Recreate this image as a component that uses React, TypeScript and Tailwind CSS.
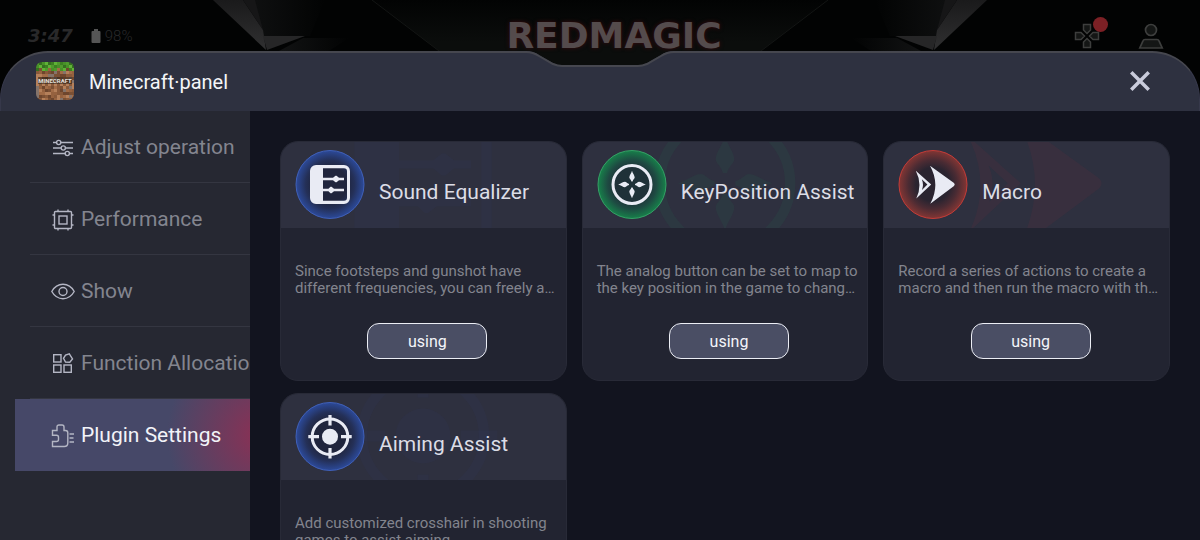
import { useState } from "react";
import type { ReactNode } from "react";

type Tone = "blue" | "green" | "red";

interface Plugin {
  id: string;
  title: string;
  description: string;
  tone: Tone;
  glyph: ReactNode;
}

interface MenuItem {
  id: string;
  label: string;
  icon: ReactNode;
}

const TONES = {
  blue: { center: "#20253d", mid: "#243058", edge: "#2c4a9a", ring: "#4060b8", ghost: "text-[#4056b8]/5" },
  green: { center: "#1f3138", mid: "#1e4a42", edge: "#17804a", ring: "#35a066", ghost: "text-[#1f9a58]/8" },
  red: { center: "#2a2430", mid: "#4a2b33", edge: "#833634", ring: "#c43c38", ghost: "text-[#c2303a]/7" },
};

const MENU: MenuItem[] = [
  {
    id: "adjust",
    label: "Adjust operation",
    icon: (
      <>
        <path d="M2 6.500h3.500M10 6.500h12M2 12h8M14.500 12h7.500M2 17.500h12M18.500 17.500h3.500" />
        <circle cx="7.700" cy="6.500" r="2.100" />
        <circle cx="12.300" cy="12" r="2.100" />
        <circle cx="16.300" cy="17.500" r="2.100" />
      </>
    ),
  },
  {
    id: "performance",
    label: "Performance",
    icon: (
      <>
        <rect x="3.500" y="3.500" width="17" height="17" rx="1" />
        <rect x="8" y="8" width="8" height="8" />
        <path d="M7 3.500V1.500M17 3.500V1.500M7 22.500v-2M17 22.500v-2M1.500 7h2M1.500 17h2M20.500 7h2M20.500 17h2" />
      </>
    ),
  },
  {
    id: "show",
    label: "Show",
    icon: (
      <>
        <path d="M.8 11.500C3.300 7 7.300 4.300 12 4.300s8.700 2.700 11.200 7.200C20.700 16 16.700 18.700 12 18.700S3.300 16 .8 11.500z" />
        <circle cx="12" cy="11.500" r="4" />
      </>
    ),
  },
  {
    id: "functions",
    label: "Function Allocation",
    icon: (
      <>
        <rect x="2.700" y="2.700" width="7.300" height="7.300" />
        <rect x="2.700" y="13" width="7.300" height="7.300" />
        <rect x="13" y="13" width="7.300" height="7.300" />
        <path d="m18.300 1.800 3.200 5.200-2.700 3.200-4.300-.2-2-3.700 2-3.200z" />
      </>
    ),
  },
  {
    id: "plugins",
    label: "Plugin Settings",
    icon: (
      <>
        <path d="M1.500 6.500H6V3q0-2 2-2h3q2 0 2 2v3.500h1.500q2.300 0 2.300 2.300V19q0 3.500-3.500 3.500H1.500V17.500h4q2 0 2-2v-2.300q0-2-2-2h-4z" />
        <path d="M18.500 10H23M18.500 14h4M18.500 18H23" />
      </>
    ),
  },
];

const PLUGINS: Plugin[] = [
  {
    id: "equalizer",
    title: "Sound Equalizer",
    description: "Since footsteps and gunshot have different frequencies, you can freely a…",
    tone: "blue",
    glyph: (
      <>
        <path
          fillRule="evenodd"
          d="M21 15h28a6 6 0 0 1 6 6v27a6 6 0 0 1-6 6H21a6 6 0 0 1-6-6V21a6 6 0 0 1 6-6zM28 18.200v32.600h21a3 3 0 0 0 3-3V21.200a3 3 0 0 0-3-3z"
        />
        <path d="M28 27.800h10l2.500-2h1l2.500 2h5v2.400h-5l-2.500 2h-1l-2.500-2H28z" />
        <path d="M28 38.800h5.500l2-2h1l2.500 2h10v2.400H39l-2.500 2h-1l-2-2H28z" />
      </>
    ),
  },
  {
    id: "keyposition",
    title: "KeyPosition Assist",
    description: "The analog button can be set to map to the key position in the game to chang…",
    tone: "green",
    glyph: (
      <>
        <circle cx="35" cy="34.500" r="19" fill="none" stroke="currentColor" strokeWidth="3" />
        {[0, 90, 180, 270].map((angle) => (
          <path
            key={angle}
            transform={`rotate(${angle} 35 34.500)`}
            d="M35 20.700c.7 2.600 2.700 4.800 2.700 6.800 0 1.200-1.500 1.800-2.100 4h-1.200c-.6-2.200-2.100-2.800-2.100-4 0-2 2-4.200 2.700-6.800z"
          />
        ))}
      </>
    ),
  },
  {
    id: "macro",
    title: "Macro",
    description: "Record a series of actions to create a macro and then run the macro with th…",
    tone: "red",
    glyph: (
      <>
        <path d="M32 15.700 56 33q1.500 1.500 0 3L32.300 53.700Q42.500 34.500 32 15.700z" />
        <path fillRule="evenodd" d="M17.800 20.700 33.200 34.500 18.300 48.500q6.500-14 -.5-27.800zM23.800 29.300q2.200 5.200.2 10.600l5.400-5.400z" />
      </>
    ),
  },
  {
    id: "aiming",
    title: "Aiming Assist",
    description: "Add customized crosshair in shooting games to assist aiming.",
    tone: "blue",
    glyph: (
      <>
        <circle cx="35" cy="34.700" r="17.800" fill="none" stroke="currentColor" strokeWidth="3" />
        <circle cx="35" cy="34.700" r="8" />
        <path
          d="M35 13v10.500M35 46v10.500M13.300 34.700h10.700M46 34.700h10.700"
          fill="none"
          stroke="currentColor"
          strokeWidth="3.200"
        />
      </>
    ),
  },
];

const GRASS = ["#4f9a2c", "#3d7f22", "#5fb236", "#35701f", "#489028"];
const DIRT = ["#8a5a3a", "#a26c47", "#6f462d", "#b5805a", "#7b5034", "#96623f", "#84736a"];

function GameIcon() {
  const cells = [];
  for (let y = 0; y < 13; y++) {
    for (let x = 0; x < 13; x++) {
      const noise = (x * 7 + y * 13 + x * y * 5 + ((x * x + y) % 4)) % 35;
      const grass = y < 2 || (y === 2 && x % 3 !== 1);
      const fill = grass ? GRASS[noise % 5] : DIRT[noise % 7];
      cells.push(<rect key={`${x}-${y}`} x={x * 3} y={y * 3} width="3" height="3" fill={fill} />);
    }
  }
  return (
    <svg viewBox="0 0 38 38" className="size-[38px] shrink-0 rounded-md" aria-hidden="true">
      {cells}
      <rect x="2" y="15" width="34" height="7" fill="#1d1512" opacity=".5" />
      <text
        x="19"
        y="21"
        textAnchor="middle"
        fontSize="6"
        fontWeight="700"
        fill="#e4e0de"
        className="font-['Roboto',sans-serif]"
      >
        MINECRAFT
      </text>
    </svg>
  );
}

function Backdrop() {
  return (
    <svg
      viewBox="0 0 1200 120"
      preserveAspectRatio="xMidYMin slice"
      className="absolute inset-x-0 top-0 h-[120px] w-full"
      aria-hidden="true"
    >
      <defs>
        <linearGradient id="facet" x1="0" x2="0" y1="0" y2="1">
          <stop offset="0" stopColor="#1a1a1b" />
          <stop offset="1" stopColor="#303031" />
        </linearGradient>
        <linearGradient id="facetFade" x1="0" x2="1" y1="0" y2="0">
          <stop offset="0" stopColor="#1c1d1e" />
          <stop offset="1" stopColor="#020303" />
        </linearGradient>
        <linearGradient id="plate" x1="0" x2="0" y1="0" y2="1">
          <stop offset="0" stopColor="#020303" />
          <stop offset=".6" stopColor="#0b0d0c" />
        </linearGradient>
        <g id="wing">
          <path d="M250 0h75l-15 36h-47z" fill="url(#facetFade)" opacity=".5" />
          <path d="M213 0h30l20 30 3 20z" fill="url(#facet)" />
          <path d="M243 0h12l8 30z" fill="#161617" />
          <path d="M263 36h42l-38 14z" fill="#262627" />
          <path d="m303 38-24 13h50l20-13z" fill="url(#facetFade)" opacity=".6" />
          <path d="M372 0l67 51" stroke="#131514" strokeWidth="1" />
        </g>
      </defs>
      <path d="M372 0h456l-67 51v20H439V51z" fill="url(#plate)" />
      <use href="#wing" />
      <use href="#wing" transform="translate(1200 0) scale(-1 1)" />
    </svg>
  );
}

function StatusBar() {
  return (
    <div className="relative grid h-[51px] shrink-0 grid-cols-[1fr_auto_1fr] items-center pt-5 pr-9 pl-7">
      <div className="flex items-center gap-[18px] text-[#29292a]">
        <span className="font-['DejaVu_Sans',sans-serif] text-lg font-bold italic">3:47</span>
        <span className="flex items-center gap-1 text-[15px] font-light">
          <svg viewBox="0 0 10 14" className="h-3.5 w-2.5" fill="#555555" aria-hidden="true">
            <path d="M3 0h4v2h1.500q1 0 1 1v10q0 1-1 1h-7q-1 0-1-1V3q0-1 1-1H3z" />
          </svg>
          98%
        </span>
      </div>
      <span className="pl-9 font-['DejaVu_Sans',sans-serif] text-4xl leading-8 font-bold text-[#544b4c] [text-shadow:0_0_4px_#3a0a0d]">
        REDMAGIC
      </span>
      <div className="flex items-center justify-end gap-[38px] text-[#3d3e3d]">
        <button type="button" aria-label="Game keys" className="relative">
          <svg viewBox="0 0 26 26" className="size-[26px]" fill="#141615" stroke="currentColor" strokeWidth="1.500" aria-hidden="true">
            {[0, 90, 180, 270].map((angle) => (
              <path key={angle} transform={`rotate(${angle} 13 13)`} d="M9.500 1.500h7v5.500L13 10.500 9.500 7z" />
            ))}
          </svg>
          <span className="absolute -top-[6px] -right-[8px] size-[15px] rounded-full bg-[#7c2025]" />
        </button>
        <button type="button" aria-label="Account">
          <svg viewBox="0 0 26 26" className="size-[26px]" fill="#141615" stroke="currentColor" strokeWidth="1.700" aria-hidden="true">
            <circle cx="13" cy="7" r="5.500" />
            <path d="M7 16.500h12q1.500 0 2 1.300l3.200 7.200H1.800L5 17.800q.5-1.300 2-1.300z" />
          </svg>
        </button>
      </div>
    </div>
  );
}

function PanelHeader() {
  return (
    <header className="relative flex h-[60px] shrink-0 items-center justify-between pr-12 pl-9">
      {/* panel outline with the notch in the middle */}
      <div className="absolute inset-0 flex" aria-hidden="true">
        <div className="flex-1 rounded-tl-[48px] border-t-2 border-l border-[#46474f] border-l-[#36384a] bg-[#2e3140]" />
        <svg viewBox="0 0 160 60" className="h-[60px] w-40">
          <path d="M0 0h6q7 0 13 4l14 8q5 3 9 3h76q4 0 9-3l14-8q6-4 13-4h6v60H0z" fill="#2e3140" />
          <path
            d="M0 1h6q7 0 13 4l14 8q5 2 9 2h76q4 0 9-2l14-8q6-4 13-4h6"
            fill="none"
            stroke="#46474f"
            strokeWidth="2"
          />
        </svg>
        <div className="flex-1 rounded-tr-[48px] border-t-2 border-r border-[#46474f] border-r-[#36384a] bg-[#2e3140]" />
      </div>
      <div className="relative flex items-center gap-[15px]">
        <GameIcon />
        <h1 className="pt-0.5 text-xl text-[#f4f5f8]">Minecraft·panel</h1>
      </div>
      <button type="button" aria-label="Close" className="relative">
        <svg viewBox="0 0 24 24" className="size-6" stroke="#c9cbdb" strokeWidth="3.500" strokeLinecap="square" aria-hidden="true">
          <path d="m4.500 4.500 15 15M19.500 4.500l-15 15" />
        </svg>
      </button>
    </header>
  );
}

function PluginIcon({ plugin }: { plugin: Plugin }) {
  const tone = TONES[plugin.tone];
  const id = `disc-${plugin.id}`;
  return (
    <svg viewBox="0 0 70 70" className="relative size-[70px] shrink-0 text-[#e9ebf4]" aria-hidden="true">
      <defs>
        <radialGradient id={id}>
          <stop offset=".5" stopColor={tone.center} />
          <stop offset=".72" stopColor={tone.mid} />
          <stop offset="1" stopColor={tone.edge} />
        </radialGradient>
      </defs>
      <circle cx="35" cy="34.500" r="34" fill={`url(#${id})`} stroke={tone.ring} strokeWidth="1" />
      <g fill="currentColor">{plugin.glyph}</g>
    </svg>
  );
}

function PluginCard({ plugin }: { plugin: Plugin }) {
  return (
    <article className="flex h-60 flex-col overflow-hidden rounded-[18px] border border-[#282a37] bg-[#222431]">
      <div className="relative flex h-[86px] shrink-0 items-center gap-3.5 overflow-hidden bg-[#2e303f] pl-3.5">
        <div className="absolute inset-0 flex items-center justify-center">
          <svg viewBox="0 0 70 70" fill="currentColor" className={`size-60 shrink-0 ${TONES[plugin.tone].ghost}`} aria-hidden="true">
            {plugin.glyph}
          </svg>
        </div>
        <PluginIcon plugin={plugin} />
        <h2 className="relative pt-4 text-[21px] whitespace-nowrap text-[#dcdde6]">{plugin.title}</h2>
      </div>
      <div className="flex flex-1 flex-col items-center pt-[35px] pr-1.5 pl-3.5">
        <p className="w-full text-[15px] leading-[17px] text-[#83848e]">{plugin.description}</p>
        <button
          type="button"
          className="mt-[26px] h-9 w-[120px] rounded-xl border border-[#eceef5] bg-[#4a4e64] pt-0.5 text-base text-[#f4f5fa]"
        >
          using
        </button>
      </div>
    </article>
  );
}

export default function App() {
  const [active, setActive] = useState<string>("plugins");

  return (
    <div className="relative flex h-screen flex-col overflow-hidden bg-[#020303] font-['Roboto',sans-serif]">
      <Backdrop />
      <StatusBar />
      <PanelHeader />
      <div className="relative flex min-h-0 flex-1">
        <nav className="w-[250px] shrink-0 overflow-hidden bg-[#262832] pl-[15px]">
          <ul>
            {MENU.map((item) => {
              const selected = item.id === active;
              return (
                <li
                  key={item.id}
                  className={
                    selected
                      ? "bg-[#464868] bg-[radial-gradient(circle_at_105%_50%,#8c3054_0%,#464868_38%)]"
                      : ""
                  }
                >
                  <button
                    type="button"
                    onClick={() => setActive(item.id)}
                    className="flex h-[72px] w-full flex-col pl-[15px] text-left"
                  >
                    <span
                      className={`flex w-full flex-1 items-center gap-[6px] overflow-hidden border-b pt-[3px] pl-[21px] text-[21px] whitespace-nowrap ${
                        selected ? "border-transparent text-[#f2f3f8]" : "border-[#343641] text-[#83858f]"
                      }`}
                    >
                      <svg
                        viewBox="0 0 24 24"
                        className="size-6 shrink-0"
                        fill="none"
                        stroke="#b4b6c4"
                        strokeWidth="1.400"
                        aria-hidden="true"
                      >
                        {item.icon}
                      </svg>
                      {item.label}
                    </span>
                  </button>
                </li>
              );
            })}
          </ul>
        </nav>
        <main className="grid flex-1 auto-rows-min grid-cols-3 gap-x-[15px] gap-y-3 overflow-hidden bg-[#12141f] p-[30px]">
          {PLUGINS.map((plugin) => (
            <PluginCard key={plugin.id} plugin={plugin} />
          ))}
        </main>
      </div>
    </div>
  );
}
